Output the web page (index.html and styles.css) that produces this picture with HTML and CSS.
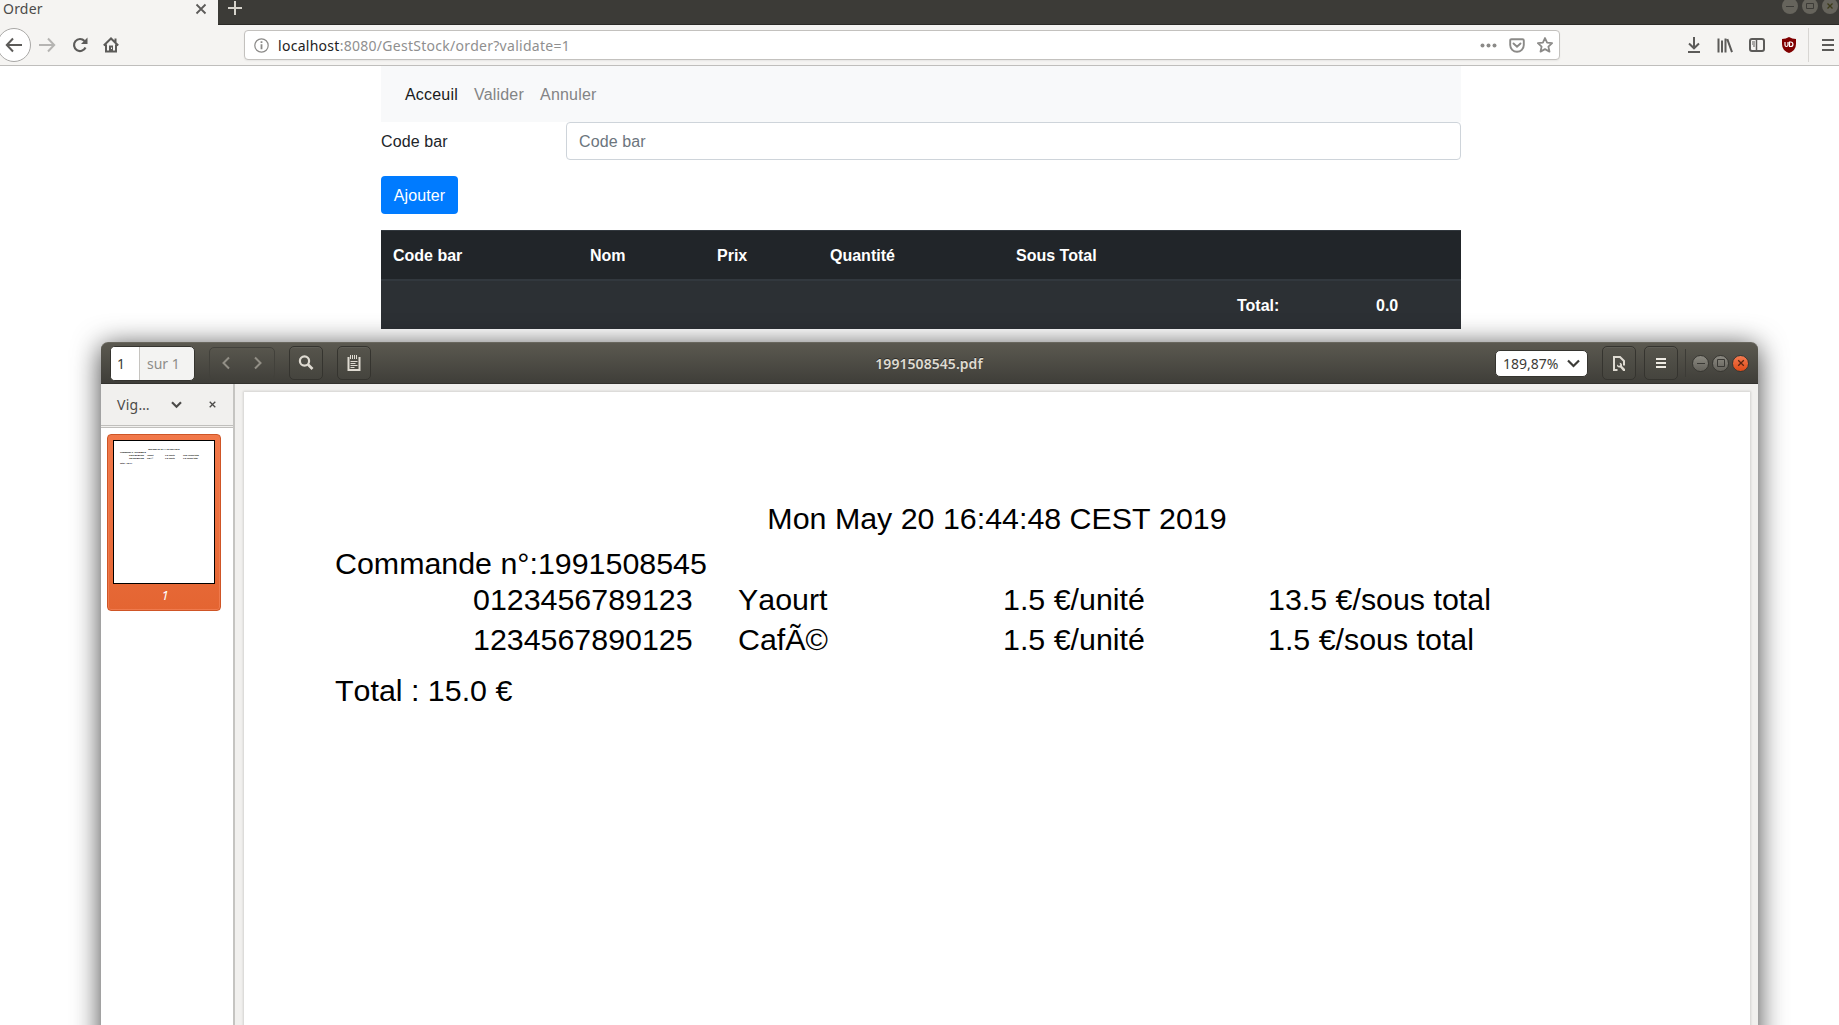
FILE: index.html
```html
<!DOCTYPE html>
<html lang="fr">
<head>
<meta charset="utf-8">
<title>Order</title>
<link rel="stylesheet" href="styles.css">
</head>
<body>
<div class="desktop">
  <header class="browser">
    <div class="tabs">
      <div class="tab"><span class="tab-title">Order</span>
        <svg width="12" height="12" viewBox="0 0 12 12"><path d="M1.5 1.5l9 9m0-9l-9 9" stroke="#5c5b59" stroke-width="1.8"/></svg>
      </div>
      <svg class="plus" width="14" height="14" viewBox="0 0 14 14"><path d="M7 0v14M0 7h14" stroke="#d6d3cb" stroke-width="2"/></svg>
      <div class="browser-controls">
        <svg width="16" height="16" viewBox="0 0 16 16"><circle cx="8" cy="8" r="8" fill="#66645c"/><path d="M4 8.500h8" stroke="#3c3b37"/></svg>
        <svg width="16" height="16" viewBox="0 0 16 16"><circle cx="8" cy="8" r="8" fill="#66645c"/><path d="M4.500 5.500h7v5h-7z" fill="none" stroke="#3c3b37"/></svg>
        <svg width="16" height="16" viewBox="0 0 16 16"><circle cx="8" cy="8" r="8" fill="#66645c"/><path d="M5.500 5.500l5 5m0-5l-5 5" stroke="#3c3b1a" stroke-width="1.300"/></svg>
      </div>
    </div>
    <div class="toolbar">
      <span class="back"><svg width="18" height="16" viewBox="0 0 18 16"><path d="M17 8H2M8 1.500L1.800 8L8 14.500" fill="none" stroke="#5c5b59" stroke-width="2"/></svg></span>
      <svg class="forward" width="18" height="16" viewBox="0 0 18 16"><path d="M1 8h15M10 1.500L16.200 8L10 14.500" fill="none" stroke="#b5b4b2" stroke-width="2"/></svg>
      <svg class="reload" width="16" height="16" viewBox="0 0 16 16"><path d="M13.500 10.500A6 6 0 1 1 12.500 4" fill="none" stroke="#5c5b59" stroke-width="2.200"/><path d="M15.500 .5V7H9z" fill="#5c5b59"/></svg>
      <svg class="home" width="16" height="16" viewBox="0 0 16 16"><path d="M.8 8.500L8 1.500l7.200 7M3 7.500V14.500h10V7.500M12.500 1.500v4" fill="none" stroke="#5c5b59" stroke-width="2"/><path d="M6 8.500h4V14H6z" fill="#5c5b59"/><path d="M8.500 10.500v1.500" stroke="#f5f4f2"/></svg>
      <div class="address">
        <svg width="15" height="15" viewBox="0 0 15 15"><circle cx="7.500" cy="7.500" r="6.700" fill="none" stroke="#8b8a88" stroke-width="1.200"/><path d="M7.500 6.300v5M7.500 3.300v1.800" stroke="#8b8a88" stroke-width="1.800"/></svg>
        <span class="url"><b>localhost</b>:8080/GestStock/order?validate=1</span>
        <svg class="dots" width="17" height="5" viewBox="0 0 17 5"><g fill="#8b8a88"><circle cx="2.500" cy="2.500" r="2"/><circle cx="8.500" cy="2.500" r="2"/><circle cx="14.500" cy="2.500" r="2"/></g></svg>
        <svg class="pocket" width="16" height="15" viewBox="0 0 16 15"><path d="M2.500 1.200h11q1.300 0 1.300 1.300V7a6.800 6.800 0 0 1-13.600 0V2.500q0-1.300 1.300-1.300z" fill="none" stroke="#8b8a88" stroke-width="1.900"/><path d="M4.500 5.500L8 8.800l3.500-3.300" fill="none" stroke="#8b8a88" stroke-width="1.900" stroke-linecap="round"/></svg>
        <svg class="star" width="16" height="16" viewBox="0 0 16 16"><path d="M8 1l2.100 4.700 5 .5-3.700 3.400 1.100 5L8 12.100l-4.500 2.500 1.100-5L.9 6.200l5-.5z" fill="none" stroke="#8b8a88" stroke-width="1.800" stroke-linejoin="round"/></svg>
      </div>
      <div class="tools">
        <svg width="14" height="16" viewBox="0 0 14 16"><path d="M7 0v11M2 6.500L7 11.300l5-4.800M1 15h12" fill="none" stroke="#5c5b59" stroke-width="2"/></svg>
        <svg width="16" height="15" viewBox="0 0 16 15"><path d="M1.500 .5v14M5 2.500v12M8.500 .5v14M10.300 1.200l4.700 13" fill="none" stroke="#5c5b59" stroke-width="2"/></svg>
        <svg width="16" height="14" viewBox="0 0 16 14"><rect x="1" y="1" width="14" height="12" rx="2" fill="none" stroke="#5c5b59" stroke-width="2"/><path d="M7.500 1v12" stroke="#5c5b59" stroke-width="1.500"/><path d="M3 4h3M3 6h3M4 8h2" stroke="#5c5b59"/></svg>
        <svg width="16" height="16" viewBox="0 0 16 16"><path d="M8 0q3 2 7 2v5q0 6.500-7 9Q1 13.500 1 7V2q4 0 7-2z" fill="#800000"/><path d="M4 5v3q0 1.500 1.400 1.500T7 8V5M8.500 5v4.500h1.200a2.200 2.200 0 0 0 0-4.500z" fill="none" stroke="#fff" stroke-width="1.200"/></svg>
        <span class="tool-divider"></span>
        <svg width="12" height="12" viewBox="0 0 12 12"><path d="M0 1h12M0 6h12M0 11h12" stroke="#5c5b59" stroke-width="2"/></svg>
      </div>
    </div>
  </header>
  <main class="order">
    <nav class="navbar"><a class="active">Acceuil</a><a>Valider</a><a>Annuler</a></nav>
    <form class="entry">
      <label for="code">Code bar</label>
      <input id="code" type="text" placeholder="Code bar">
    </form>
    <button class="add" type="button">Ajouter</button>
    <table class="items">
      <colgroup><col class="c1"><col class="c2"><col class="c3"><col class="c4"><col class="c5"><col class="c6"><col class="c7"></colgroup>
      <thead><tr><th>Code bar</th><th>Nom</th><th>Prix</th><th>Quantité</th><th>Sous Total</th><th></th><th></th></tr></thead>
      <tbody><tr><th></th><th></th><th></th><th></th><th></th><th>Total:</th><th>0.0</th></tr></tbody>
    </table>
  </main>

  <section class="viewer">
    <header class="viewer-bar">
      <div class="page-box"><span class="page-current">1</span><span class="page-count">sur 1</span></div>
      <div class="pager">
        <svg width="8" height="14" viewBox="0 0 8 14"><path d="M7 1.500L1.500 7L7 12.500" fill="none" stroke="#928f86" stroke-width="2"/></svg>
        <svg width="8" height="14" viewBox="0 0 8 14"><path d="M1 1.500L6.500 7L1 12.500" fill="none" stroke="#928f86" stroke-width="2"/></svg>
      </div>
      <div class="bar-button search"><svg width="16" height="16" viewBox="0 0 16 16"><circle cx="6.500" cy="6" r="4.600" fill="none" stroke="#dfdbd2" stroke-width="2.200"/><path d="M10 9.500l4.500 4.500" stroke="#dfdbd2" stroke-width="2.600"/></svg></div>
      <div class="bar-button notes"><svg width="14" height="16" viewBox="0 0 14 16"><path d="M1.500 2v13h11V2" fill="none" stroke="#dfdbd2" stroke-width="2"/><path d="M3.500 0v4M5.500 0v4M7.500 0v4M9.500 0v4" stroke="#dfdbd2"/><path d="M3.500 6.500h7M3.500 8.500h5M3.500 10.500h7M3.500 12.500h4" stroke="#dfdbd2"/></svg></div>
      <div class="viewer-title">1991508545.pdf</div>
      <div class="zoom"><span>189,87%</span><svg width="13" height="9" viewBox="0 0 13 9"><path d="M1 1.500l5.500 5.500L12 1.500" fill="none" stroke="#3c3b37" stroke-width="2.200"/></svg></div>
      <div class="bar-button props"><svg width="13" height="15" viewBox="0 0 13 15"><path d="M4.500 14H1V1h6l4 4v4.500" fill="none" stroke="#dfdbd2" stroke-width="2"/><path d="M4 8.500q-.3 3.500 3.200 3l3 3.500H12v-2L9 10q.5-3-2.500-3.300L7.300 9 6 10z" fill="#dfdbd2"/></svg></div>
      <div class="bar-button menu"><svg width="10" height="10" viewBox="0 0 10 10"><path d="M0 1h10M0 5h10M0 9h10" stroke="#eeebe3" stroke-width="2"/></svg></div>
      <span class="bar-divider"></span>
      <div class="viewer-controls">
        <span class="round"><svg width="14" height="14" viewBox="0 0 14 14"><path d="M3 7.500h8" stroke="#3a3935"/></svg></span>
        <span class="round"><svg width="14" height="14" viewBox="0 0 14 14"><path d="M3.500 3.500h7v7h-7z" fill="none" stroke="#3a3935"/></svg></span>
        <span class="round close"><svg width="14" height="14" viewBox="0 0 14 14"><path d="M4.200 4.200l5.600 5.600m0-5.600L4.200 9.800" stroke="#5a2410" stroke-width="1.300"/></svg></span>
      </div>
    </header>
    <div class="viewer-body">
      <aside class="side">
        <div class="side-head"><span>Vig…</span>
          <svg class="chevron" width="11" height="8" viewBox="0 0 11 8"><path d="M1 1.200l4.500 4.500L10 1.200" fill="none" stroke="#4c4b49" stroke-width="2.200"/></svg>
          <svg width="7" height="7" viewBox="0 0 7 7"><path d="M.7.7l5.600 5.600m0-5.600L.7 6.300" stroke="#4c4b49" stroke-width="1.300"/></svg>
        </div>
        <div class="thumbs">
          <div class="thumb">
            <div class="mini">
              <p class="mini-date">Mon May 20 16:44:48 CEST 2019</p>
              <p>Commande n°:1991508545</p>
              <div class="mini-row"><span>0123456789123</span><span>Yaourt</span><span>1.5 €/unité</span><span>13.5 €/sous total</span></div>
              <div class="mini-row"><span>1234567890125</span><span>CafÃ©</span><span>1.5 €/unité</span><span>1.5 €/sous total</span></div>
              <p class="mini-total">Total : 15.0 €</p>
            </div>
            <span class="thumb-label">1</span>
          </div>
        </div>
      </aside>
      <div class="canvas">
        <article class="sheet">
          <p class="date">Mon May 20 16:44:48 CEST 2019</p>
          <p class="ref">Commande n°:1991508545</p>
          <div class="line"><span>0123456789123</span><span>Yaourt</span><span>1.5 €/unité</span><span>13.5 €/sous total</span></div>
          <div class="line second"><span>1234567890125</span><span>CafÃ©</span><span>1.5 €/unité</span><span>1.5 €/sous total</span></div>
          <p class="total">Total : 15.0 €</p>
        </article>
      </div>
    </div>
  </section>
</div>
</body>
</html>
```
FILE: styles.css
```css
* { box-sizing: border-box; }
body { margin: 0; background: #fff; overflow: hidden; }
p { margin: 0; }
svg { display: block; flex: none; }

.desktop { position: relative; width: 1839px; height: 1025px; overflow: hidden; font-family: "Noto Sans", sans-serif; }

/* Browser chrome */
.tabs { display: flex; height: 25px; background: #3c3b37; border-bottom: 1px solid #2b2a27; }
.tab { display: flex; justify-content: space-between; width: 218px; height: 25px; padding: 3px 11px 0 3px; background: #f5f4f2; color: #4c4b49; }
.tab-title { margin-top: -4px; font-size: 14px; letter-spacing: .2px; line-height: 20px; }
.plus { margin: 1px 0 0 10px; }
.browser-controls { display: flex; gap: 4px; margin: -2px 1px 0 auto; }
.toolbar { display: flex; align-items: center; height: 41px; background: #f5f4f2; border-bottom: 1px solid #bfbebc; }
.back { display: flex; align-items: center; justify-content: center; flex: none; width: 34px; height: 34px; margin-left: -3px; padding-right: 1px; border: 1px solid #a9a8a6; border-radius: 50%; background: #fff; }
.forward { margin-left: 7px; }
.reload { margin-left: 16px; }
.home { margin-left: 15px; }
.address { display: flex; align-items: center; width: 1316px; height: 30px; margin-left: 125px; padding: 0 6px 0 9px; border: 1px solid #c3c1be; border-radius: 4px; background: #fff; box-shadow: 0 1px 2px rgba(0, 0, 0, .06); }
.url { margin-left: 9px; color: #8f8f8f; font-size: 14px; letter-spacing: .28px; }
.url b { color: #222; font-weight: 400; }
.dots { margin-left: auto; }
.pocket { margin-left: 12px; }
.star { margin-left: 12px; }
.tools { display: flex; align-items: center; gap: 16px; margin: 0 5px 0 auto; }
.tool-divider { width: 1px; height: 34px; margin: 0 -3px 0 -5px; background: #d8d6d3; }

/* Order page */
.order { width: 1080px; margin-left: 381px; color: #212529; font: 16px/24px "Liberation Sans", Arial, sans-serif; letter-spacing: .1px; }
.navbar { display: flex; gap: 16px; height: 56px; padding: 17px 24px 0; background: #f8f9fa; color: #838485; letter-spacing: .2px; }
.navbar .active { color: #1a1b1c; }
.entry { display: flex; align-items: center; justify-content: space-between; height: 38px; margin: 0 0 16px; }
.entry label { padding-top: 2px; }
.entry input { width: 895px; height: 38px; padding: 7px 12px 5px; border: 1px solid #ced4da; border-radius: 4px; background: #fff; font: inherit; letter-spacing: inherit; }
.entry input::placeholder { color: #6c757d; opacity: 1; }
.add { display: block; width: 77px; height: 38px; padding: 2px 0 0; border: 0; border-radius: 4px; background: #007bff; color: #fff; font: inherit; letter-spacing: inherit; }
.items { width: 1080px; margin-top: 16px; border-collapse: separate; border-spacing: 0; table-layout: fixed; background: #212529; color: #fff; letter-spacing: 0; }
.items th { height: 48px; padding: 2px 12px 0; text-align: left; }
.items thead th { height: 51px; border-top: 1px solid #32383e; border-bottom: 2px solid #32383e; }
.items tbody { background: #2c3034; }
.c1 { width: 197px; } .c2 { width: 127px; } .c3 { width: 113px; } .c4 { width: 186px; } .c5 { width: 221px; } .c6 { width: 139px; } .c7 { width: 97px; }

/* Document viewer window, floating over the browser */
.viewer { position: absolute; left: 101px; top: 342px; width: 1657px; height: 720px; border-radius: 7px 7px 0 0; background: #f1f0ee; box-shadow: 0 4px 28px rgba(0, 0, 0, .75); }
.viewer-bar { display: flex; align-items: center; height: 42px; padding: 0 9px; border-radius: 7px 7px 0 0; background: linear-gradient(#5b5950, #3f3e39); border-top: 1px solid #69675e; border-bottom: 1px solid #33322e; }
.page-box { display: flex; width: 85px; height: 35px; border: 1px solid #35342f; border-radius: 5px; background: #f3f3f2; overflow: hidden; font-size: 14px; line-height: 33px; }
.page-current { width: 29px; padding-left: 6px; border-right: 1px solid #c6c4c0; background: #fff; color: #3c3b37; }
.page-count { padding-left: 7px; color: #8d8c89; }
.pager { display: flex; align-items: center; justify-content: space-between; width: 66px; height: 33px; margin-left: 14px; padding: 0 12px; border: 1px solid #42413b; border-radius: 5px; }
.bar-button { display: flex; align-items: center; justify-content: center; flex: none; width: 34px; height: 34px; border: 1px solid #35342f; border-radius: 5px; background: linear-gradient(#56544c, #45443e); box-shadow: inset 0 1px rgba(255, 255, 255, .06); }
.search { margin-left: 14px; }
.notes { margin-left: 14px; }
.viewer-title { width: 112px; margin-left: 502px; color: #dfdbd2; font-size: 14px; font-weight: 600; letter-spacing: .05px; text-align: center; text-shadow: 0 -1px #2d2c28; }
.zoom { display: flex; align-items: center; justify-content: space-between; width: 93px; height: 27px; margin-left: auto; padding: 0 7px; border: 1px solid #35342f; border-radius: 5px; background: #fff; color: #3c3b37; font-size: 14px; }
.props { margin-left: 14px; }
.menu { margin-left: 8px; }
.bar-divider { width: 1px; height: 28px; margin-left: 7px; background: #3c3b36; }
.viewer-controls { display: flex; gap: 3px; margin-left: 6px; }
.round { display: flex; align-items: center; justify-content: center; width: 17px; height: 17px; border: 1px solid #383732; border-radius: 50%; background: linear-gradient(#8b8981, #64625b); }
.close { background: linear-gradient(#f47b51, #df4a17); }
.viewer-body { display: flex; height: 678px; }
.side { width: 134px; border-right: 2px solid #c5c4c1; background: #fff; }
.side-head { display: flex; align-items: center; height: 44px; padding: 0 17px 2px 16px; border-bottom: 1px solid #c0bfbc; background: #f1f0ee; box-shadow: inset 0 -1px #f1f0ee, inset 0 -2px #c0bfbc; color: #4c4b49; font-size: 14px; letter-spacing: .3px; }
.chevron { margin: 0 27px 0 auto; }
.side-head span { width: 40px; }
.thumbs { padding: 6px; }
.thumb { width: 114px; height: 177px; padding: 5px; border: 1px solid #cf5526; border-radius: 4px; background: linear-gradient(#f27849, #e46532); box-shadow: inset 0 0 0 1px #ef7a4d; text-align: center; }
.mini { width: 102px; height: 144px; padding: 7px 6px; border: 1px solid #000; background: #fff; color: #000; font: bold 2.050px/3px "Liberation Sans", Arial, sans-serif; text-align: left; }
.mini-date { text-align: center; }
.mini-row { display: grid; grid-template-columns: repeat(4, 18px); padding-left: 9px; white-space: nowrap; }
.mini-total { margin-top: 2px; }
.thumb-label { display: block; padding-left: 2px; color: #fff; font-size: 13px; font-style: italic; line-height: 22px; }
.canvas { flex: 1; padding: 8px 8px 0 9px; }
.sheet { height: 670px; padding: 108.500px 0 0 91px; background: #fff; box-shadow: 0 0 2px 1px rgba(0, 0, 0, .12); color: #000; font: 30.380px/34px "Liberation Sans", Arial, sans-serif; font-kerning: none; }
.date { margin-left: -91px; text-align: center; }
.ref { margin-top: 11px; }
.line { display: grid; grid-template-columns: repeat(4, 265px); margin-top: 2px; padding-left: 138px; white-space: nowrap; }
.second { margin-top: 6px; }
.total { margin-top: 17px; }
```
